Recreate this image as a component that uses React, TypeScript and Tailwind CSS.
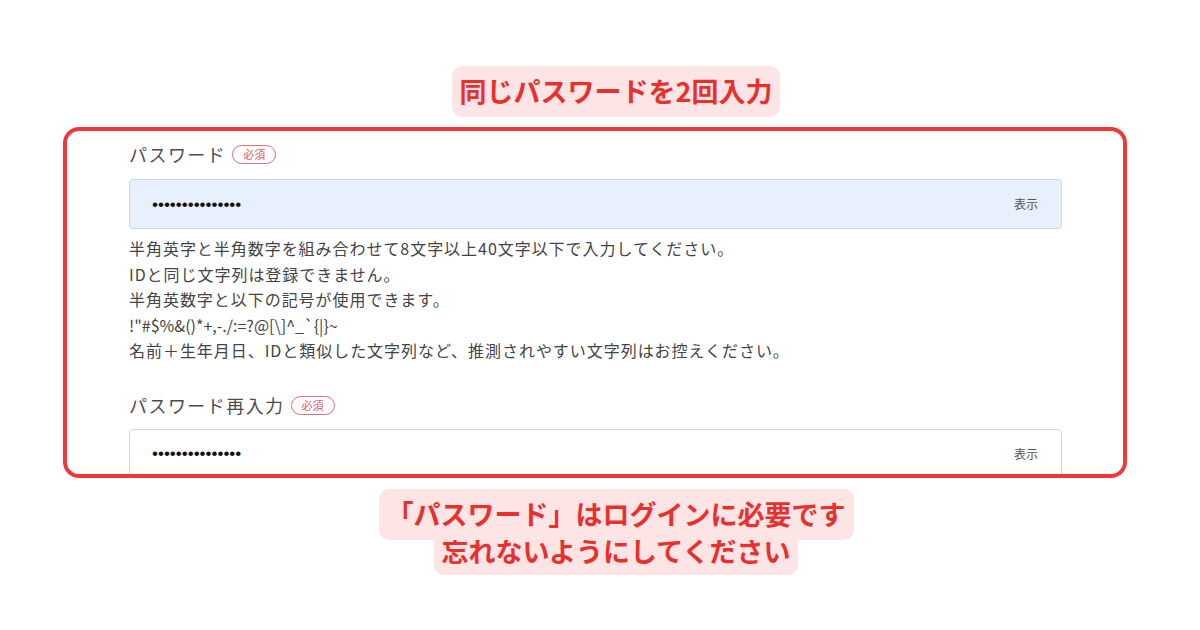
const jp = "font-['Noto_Sans_CJK_JP','Noto_Sans',sans-serif]";

const Badge = () => (
  <span className="inline-flex h-[19px] w-[44px] items-center justify-center rounded-full border border-[#de6f7c] text-[11px] leading-none text-[#d45a69]">
    必須
  </span>
);

const PasswordField = ({ label, filled }: { label: string; filled?: boolean }) => (
  <div>
    <div className="flex h-[27px] items-center gap-[6px]">
      <span className="text-[18px] tracking-[0.08em] text-[#4d4d4d]">{label}</span>
      <Badge />
    </div>
    <div
      className={
        filled
          ? "mt-[11px] flex h-[50px] items-center justify-between rounded-[4px] border border-[#cfd6e2] bg-[#e8f0fe] pl-[22px] pr-[23px]"
          : "mt-[10px] flex h-[50px] items-center justify-between rounded-[4px] border border-[#d6d6d6] bg-white pl-[22px] pr-[23px]"
      }
    >
      <span className="font-['Liberation_Sans',sans-serif] text-[17px] leading-none text-[#111]">•••••••••••••••</span>
      <span className="text-[12px] text-[#555]">表示</span>
    </div>
  </div>
);

const tag = "flex h-[51px] items-center rounded-[10px] bg-[#fde5e5] px-[8px] text-[27px] font-bold text-[#e8302d]";

export default function App() {
  return (
    <div className={`${jp} h-[630px] w-[1200px] overflow-hidden bg-white`}>
      <div className="ml-8 flex justify-center pt-[66px]">
        <div className={tag}>同じパスワードを2回入力</div>
      </div>

      <div className="ml-[63px] mt-[10px] h-[351px] w-[1064px] overflow-hidden rounded-[16px] border-4 border-[#f03838]">
        <div className="ml-[62px] w-[933px] pt-[10px]">
          <PasswordField label="パスワード" filled />
          <div className="mt-[7px] text-[16px] leading-[25.6px] tracking-[0.06em] text-[#444]">
            <p>半角英字と半角数字を組み合わせて8文字以上40文字以下で入力してください。</p>
            <p>IDと同じ文字列は登録できません。</p>
            <p>半角英数字と以下の記号が使用できます。</p>
            <p className="tracking-normal">!&quot;#$%&amp;()*+,-./:=?@[\]^_`{"{|}"}~</p>
            <p>名前＋生年月日、IDと類似した文字列など、推測されやすい文字列はお控えください。</p>
          </div>
          <div className="mt-[28px]">
            <PasswordField label="パスワード再入力" />
          </div>
        </div>
      </div>

      <div className="ml-8 mt-[11px] flex flex-col items-center">
        <div className={`${tag} relative z-10`}>「パスワード」はログインに必要です</div>
        <div className={`${tag} -mt-[16px] pt-[4px]`}>忘れないようにしてください</div>
      </div>
    </div>
  );
}
